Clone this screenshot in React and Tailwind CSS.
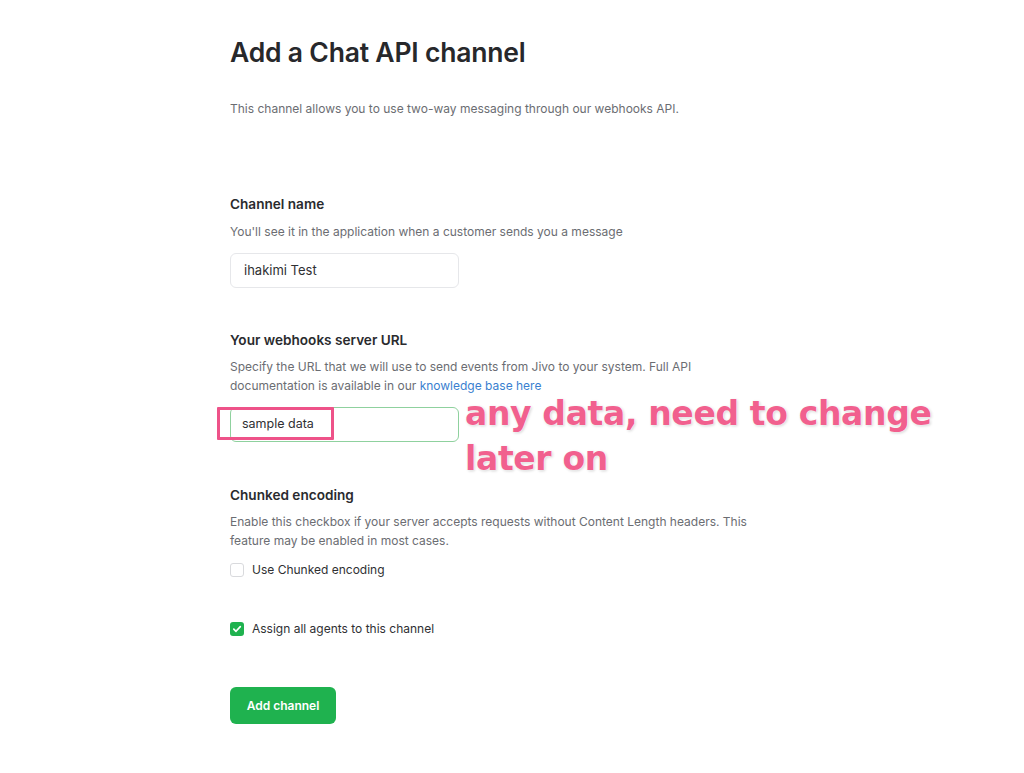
import React from 'react';

const Label = ({ children }) => (
    <div className="text-[13.6px] font-semibold text-[#2a2b2e] leading-[20px]">{children}</div>
);

const Hint = ({ children, className = '' }) => (
    <p className={`text-[12px] text-[#6b6d72] leading-[19px] ${className}`}>{children}</p>
);

export default function App() {
    return (
        <div className="min-h-[773px] w-[1024px] bg-white" style={{ fontFamily: 'Inter, "Noto Sans", sans-serif' }}>
            <div className="pl-[230px] pt-[34px] w-[780px]">
                <h1 className="text-[26.5px] font-semibold text-[#27282b] leading-[36px] tracking-[-0.2px]">Add a Chat API channel</h1>
                <Hint className="mt-[29px]">This channel allows you to use two-way messaging through our webhooks API.</Hint>

                {/* Channel name */}
                <div className="mt-[76px]">
                    <Label>Channel name</Label>
                    <Hint className="mt-[8px]">You'll see it in the application when a customer sends you a message</Hint>
                    <div className="mt-[12px] w-[229px] h-[35px] rounded-md border border-[#e6e7ea] flex items-center px-[13px] text-[13px] text-[#2f3033]">
                        ihakimi Test
                    </div>
                </div>

                {/* Webhooks URL */}
                <div className="mt-[42px]">
                    <Label>Your webhooks server URL</Label>
                    <Hint className="mt-[7px]">
                        Specify the URL that we will use to send events from Jivo to your system. Full API<br />
                        documentation is available in our <span className="text-[#3a7fd0]">knowledge base here</span>
                    </Hint>
                    <div className="mt-[12px] relative w-[229px] h-[35px] rounded-md border border-[#8fd19e] flex items-center px-[11px] text-[12.5px] text-[#2f3033]">
                        sample data
                        <div className="absolute left-[-14px] top-[-1px] w-[117px] h-[33px] border-[3px] border-[#ee5289] rounded-[1px]" />
                        <div
                            className="absolute left-[234px] top-[-17px] whitespace-nowrap text-[33px] font-bold leading-[45px] text-[#f1608e] tracking-[-0.35px]"
                            style={{ fontFamily: '"DejaVu Sans", Verdana, sans-serif', textShadow: '0 0 2px #fff, 0 0 1px #fff, 1px 1px 3px rgba(0,0,0,0.2)' }}
                        >
                            any data, need to change<br />later on
                        </div>
                    </div>
                </div>

                {/* Chunked encoding */}
                <div className="mt-[43px]">
                    <Label>Chunked encoding</Label>
                    <Hint className="mt-[7px]">
                        Enable this checkbox if your server accepts requests without Content Length headers. This<br />
                        feature may be enabled in most cases.
                    </Hint>
                    <label className="mt-[11px] flex items-center gap-[8px] text-[12px] text-[#2f3033]">
                        <span className="w-[14px] h-[14px] rounded-[3px] border border-[#d9dadd] bg-white" />
                        Use Chunked encoding
                    </label>
                </div>

                <label className="mt-[41px] flex items-center gap-[8px] text-[12px] text-[#2f3033]">
                    <span className="w-[14px] h-[14px] rounded-[3px] bg-[#1fb24f] flex items-center justify-center">
                        <svg width="10" height="10" viewBox="0 0 10 10" fill="none">
                            <path d="M1.8 5.2 L4 7.3 L8.3 2.6" stroke="white" strokeWidth="1.7" strokeLinecap="round" strokeLinejoin="round" />
                        </svg>
                    </span>
                    Assign all agents to this channel
                </label>

                <button className="mt-[49px] w-[106px] h-[37px] rounded-md bg-[#1fb24f] text-white text-[12px] font-semibold">
                    Add channel
                </button>
            </div>
        </div>
    );
}
